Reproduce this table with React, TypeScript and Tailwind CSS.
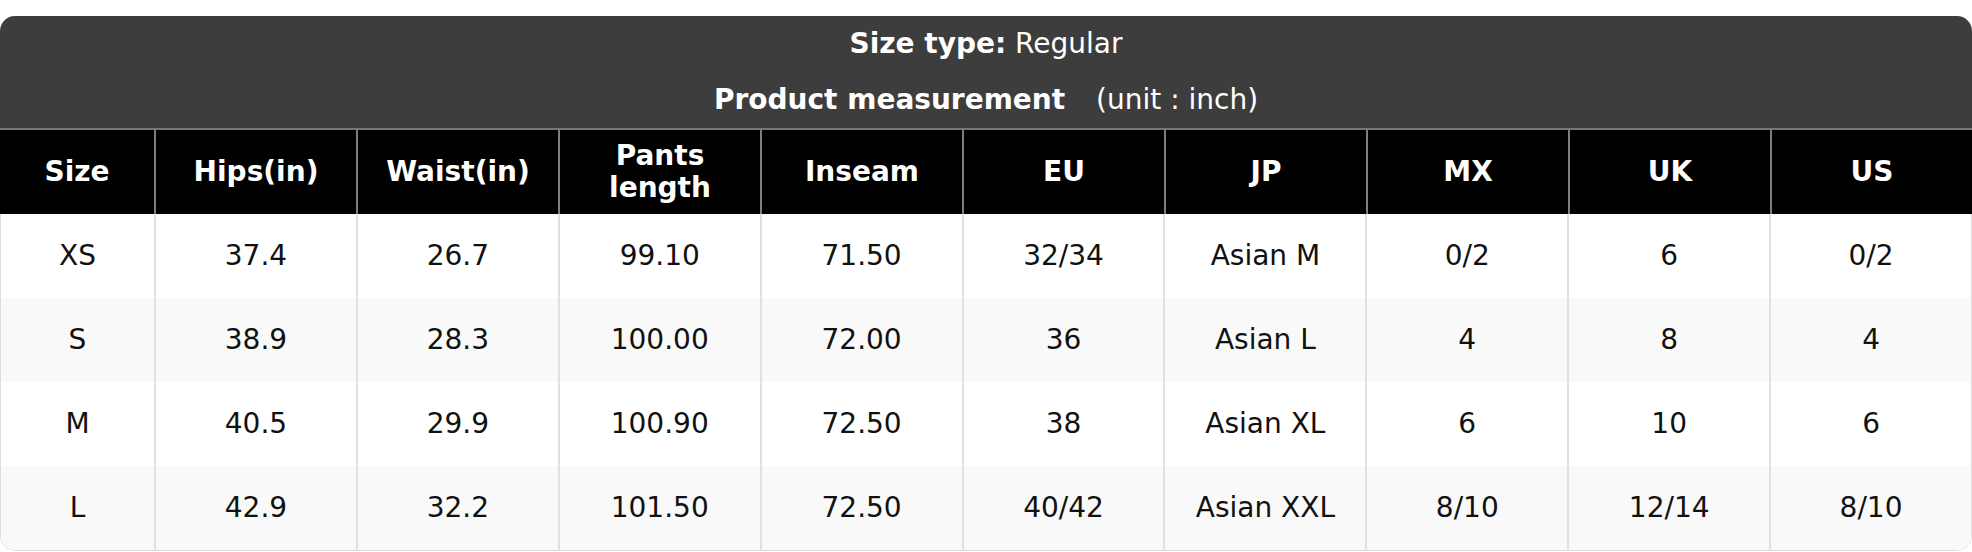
const columns = ['Size', 'Hips(in)', 'Waist(in)', 'Pants length', 'Inseam', 'EU', 'JP', 'MX', 'UK', 'US'];

const rows = [
  ['XS', '37.4', '26.7', '99.10', '71.50', '32/34', 'Asian M', '0/2', '6', '0/2'],
  ['S', '38.9', '28.3', '100.00', '72.00', '36', 'Asian L', '4', '8', '4'],
  ['M', '40.5', '29.9', '100.90', '72.50', '38', 'Asian XL', '6', '10', '6'],
  ['L', '42.9', '32.2', '101.50', '72.50', '40/42', 'Asian XXL', '8/10', '12/14', '8/10'],
];

export default function App() {
  return (
    <div className="bg-white pt-4 pb-[2px] font-['DejaVu_Sans',sans-serif] text-[28px]">
      <div className="rounded-[15px] overflow-hidden">
        {/* Title block */}
        <div className="bg-[#3d3d3d] text-white text-center leading-[56px]">
          <div>
            <span className="font-bold">Size type:</span> Regular
          </div>
          <div>
            <span className="font-bold">Product measurement</span>{' '}
            <span className="ml-[22px]">(unit : inch)</span>
          </div>
        </div>

        {/* Column headers */}
        <div className="grid grid-cols-[154px_repeat(9,1fr)] bg-black text-white font-bold border-t-2 border-[#777777]">
          {columns.map((c, i) => (
            <div
              key={c}
              className={`h-[84px] flex items-center justify-center text-center leading-[32px] ${
                i > 0 ? 'border-l-2 border-[#7f7f7f]' : ''
              }`}
            >
              {c === 'Pants length' ? (
                <span>
                  Pants
                  <br />
                  length
                </span>
              ) : (
                c
              )}
            </div>
          ))}
        </div>

        {/* Body */}
        <div className="border-x border-b border-[#dddddd] rounded-b-[15px] overflow-hidden text-[#111111]">
          {rows.map((r, ri) => (
            <div
              key={r[0]}
              className={`grid grid-cols-[153px_repeat(9,1fr)] ${ri % 2 === 1 ? 'bg-[#f9f9f9]' : 'bg-white'}`}
            >
              {r.map((v, i) => (
                <div
                  key={i}
                  className={`h-[84px] flex items-center justify-center ${
                    i > 0 ? 'border-l-2 border-[#e0e0e0]' : ''
                  }`}
                >
                  {v}
                </div>
              ))}
            </div>
          ))}
        </div>
      </div>
    </div>
  );
}
